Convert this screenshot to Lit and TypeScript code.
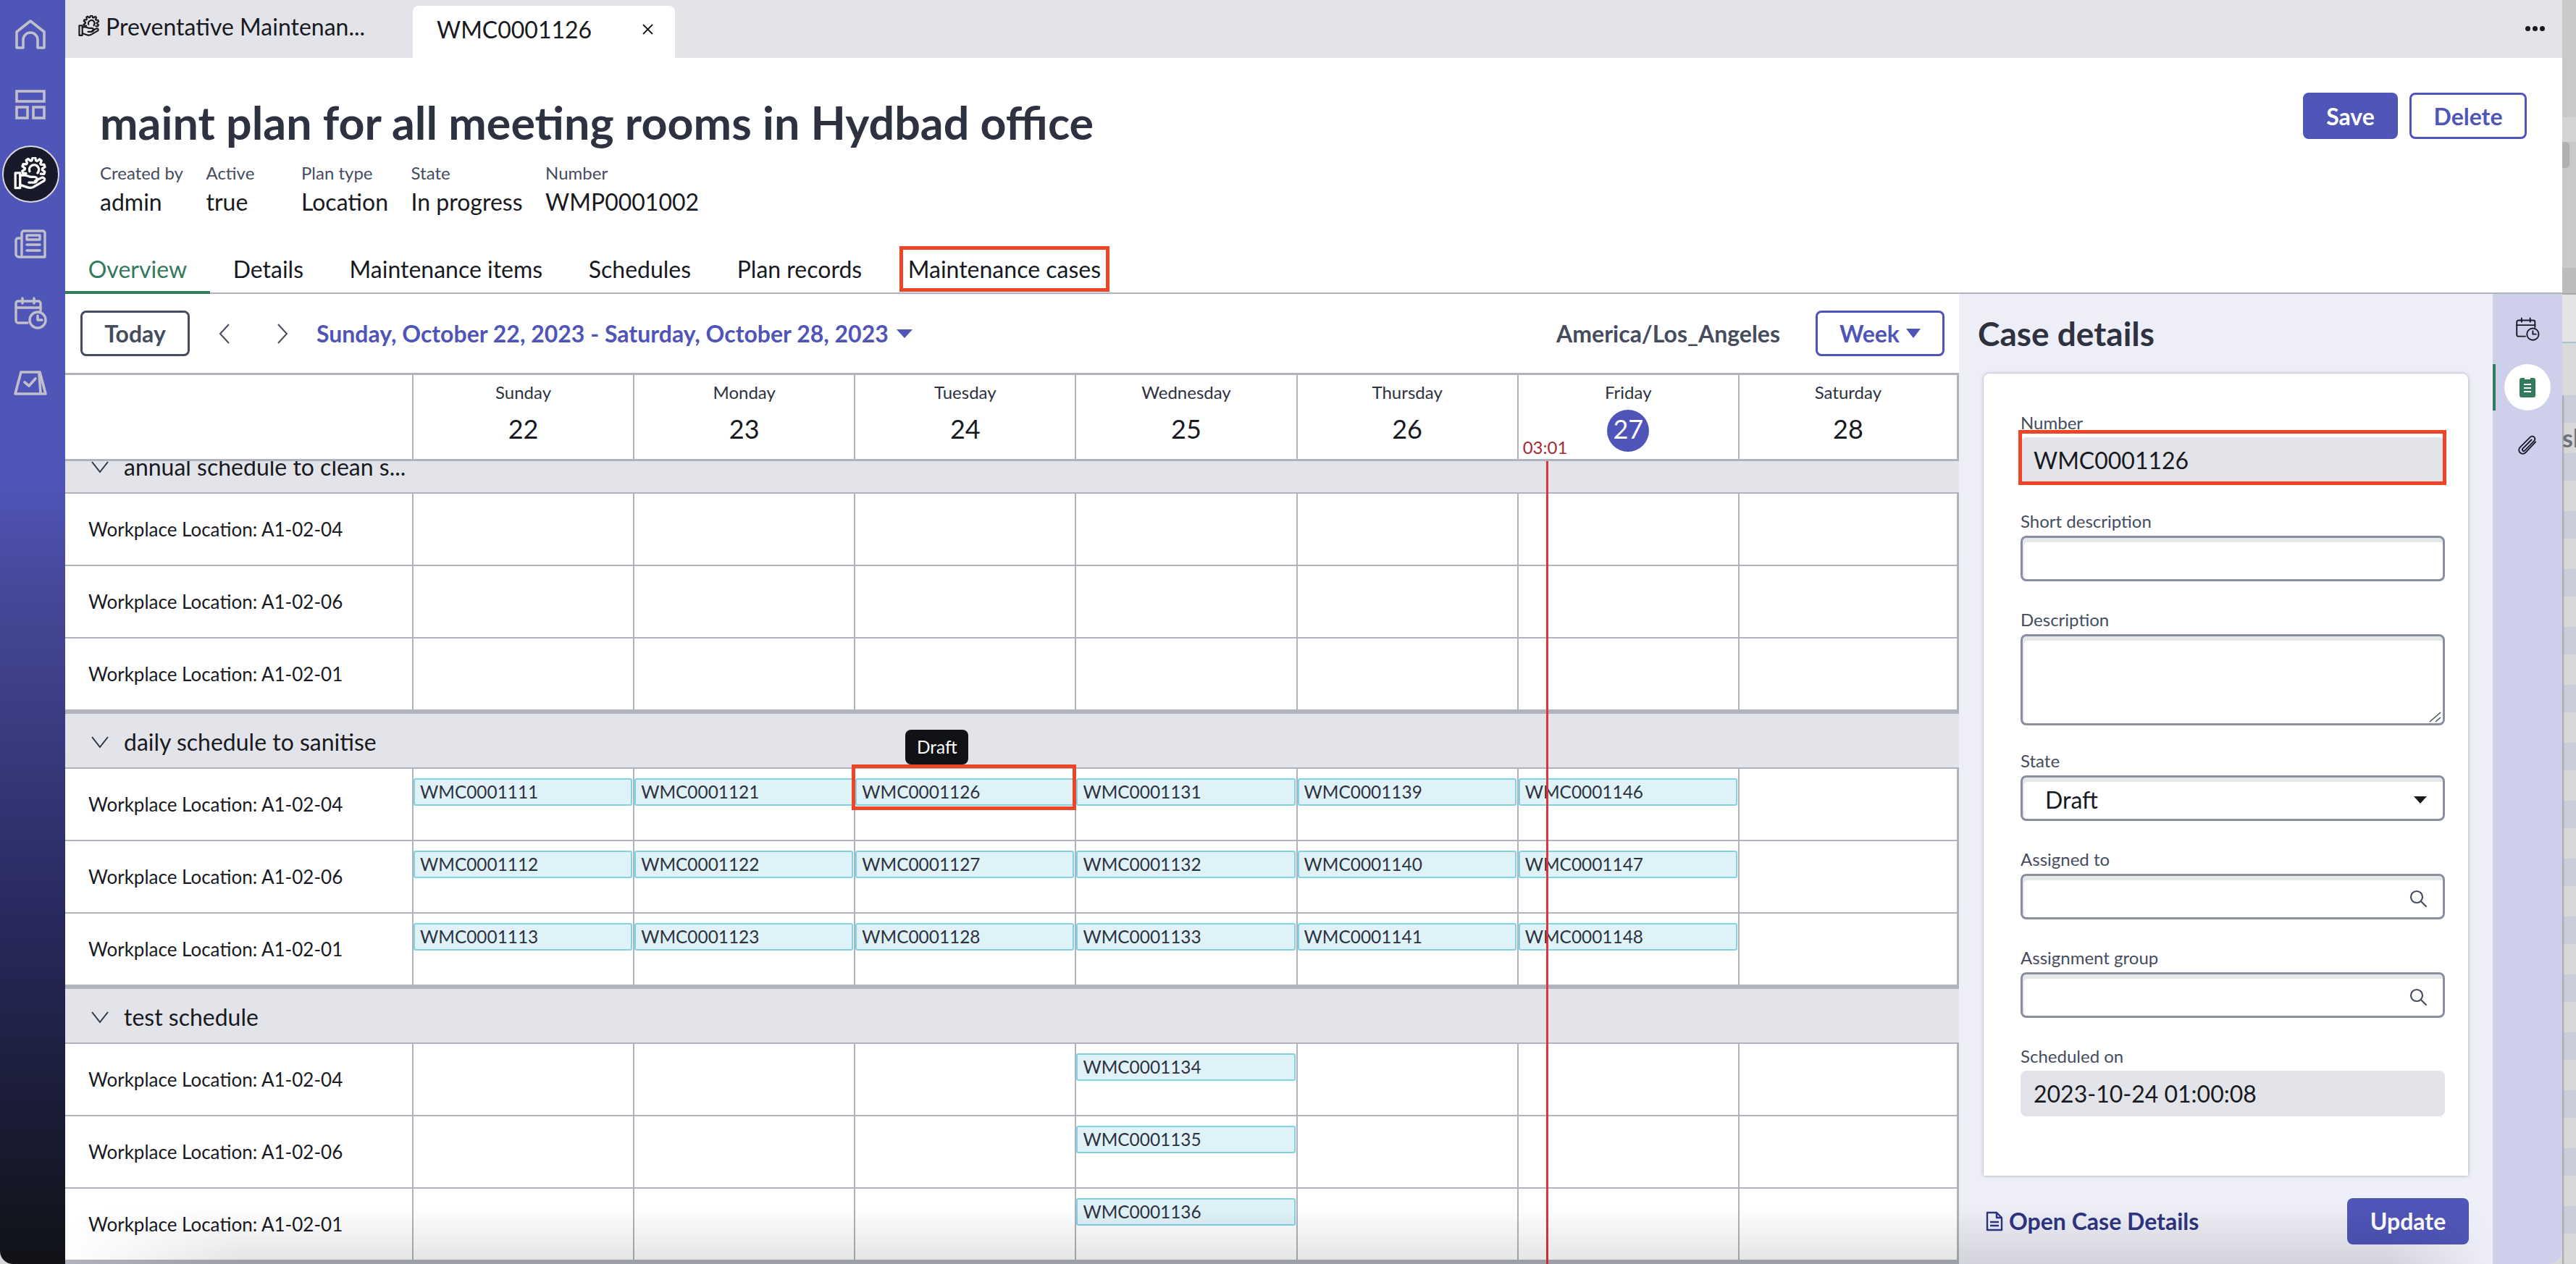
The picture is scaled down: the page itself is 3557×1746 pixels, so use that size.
import { LitElement, html, css } from 'lit';
import { customElement } from 'lit/decorators.js';

// open gear outline, from lower left over the top to lower right
const gearPath = (cx: number, cy: number, inner: number, outer: number) => {
  const pts: string[] = [];
  const step = 36;
  for (let a = 150; a < 400; a += step) {
    const angles: [number, number][] = [
      [a, inner],
      [a + step * 0.22, outer],
      [a + step * 0.55, outer],
      [a + step * 0.77, inner],
    ];
    for (const [deg, r] of angles) {
      const rad = (deg * Math.PI) / 180;
      pts.push(`${(cx + r * Math.cos(rad)).toFixed(1)} ${(cy + r * Math.sin(rad)).toFixed(1)}`);
    }
  }
  return 'M' + pts.join('L');
};

const careIcon = (size: number) => html`
  <svg width=${size} height=${size} viewBox="0 0 42 42" fill="none" stroke="currentColor" stroke-width="3" stroke-linecap="round" stroke-linejoin="round">
    <path d=${gearPath(25, 15, 11, 14.5)} />
    <path d="M20 18a6 6 0 1 1 10 2" />
    <path d="M2 20h6v19H2z" />
    <path d="M8 23h6c3 0 5 2 8 2h4a3 3 0 0 1 0 7h-7" />
    <path d="M8 35l9 3c3 1 6 1 9-1l12-7c2-2 0-5-3-4l-8 4" />
  </svg>`;

const homeIcon = html`
  <svg width="42" height="42" viewBox="0 0 42 42" fill="none" stroke="currentColor" stroke-width="3.6" stroke-linejoin="round">
    <path d="M2 39V17L21 2l19 15v22h-9V28a10 10 0 0 0-20 0v11z" />
  </svg>`;

const layoutIcon = html`
  <svg width="42" height="42" viewBox="0 0 42 42" fill="none" stroke="currentColor" stroke-width="3.6">
    <rect x="2" y="3" width="38" height="14" />
    <rect x="2" y="25" width="15" height="15" />
    <rect x="25" y="25" width="15" height="15" />
  </svg>`;

const newsIcon = html`
  <svg width="44" height="42" viewBox="0 0 44 42" fill="none" stroke="currentColor" stroke-width="3.4" stroke-linecap="round" stroke-linejoin="round">
    <path d="M10 36V6a3 3 0 0 1 3-3h26a3 3 0 0 1 3 3v33H6a4 4 0 0 1-4-4V16a3 3 0 0 1 3-3h5" />
    <rect x="17" y="9" width="18" height="6" />
    <path d="M17 22h18M17 30h18" />
  </svg>`;

const calendarClock = (size: number, sw: number) => html`
  <svg width=${size} height=${size} viewBox="0 0 46 46" fill="none" stroke="currentColor" stroke-width=${sw} stroke-linecap="round" stroke-linejoin="round">
    <path d="M19 36H6a3 3 0 0 1-3-3V9a3 3 0 0 1 3-3h28a3 3 0 0 1 3 3v10" />
    <path d="M3 15h34M12 2v7M28 2v7" />
    <circle cx="33" cy="32" r="11" />
    <path d="M33 26v6h6" />
  </svg>`;

const boardIcon = html`
  <svg width="46" height="34" viewBox="0 0 46 34" fill="none" stroke="currentColor" stroke-width="3.6" stroke-linecap="round" stroke-linejoin="round">
    <path d="M10 2h26l8 30H2z" />
    <path d="M35 3l2 28" />
    <path d="M15 16l6 5 9-10" />
  </svg>`;

const chevronDown = html`
  <svg width="26" height="18" viewBox="0 0 26 18" fill="none" stroke="#2e3240" stroke-width="2"><path d="M2 2l11 14L24 2" /></svg>`;

const searchIcon = html`
  <svg width="24" height="24" viewBox="0 0 24 24" fill="none" stroke="#464c5e" stroke-width="2.2" stroke-linecap="round"><circle cx="10" cy="10" r="8" /><path d="M16 16l7 7" /></svg>`;

interface Row {
  label: string;
  events: (string | null)[];
}

interface Group {
  title: string;
  rows: Row[];
}

const DAYS = [
  ['Sunday', '22'],
  ['Monday', '23'],
  ['Tuesday', '24'],
  ['Wednesday', '25'],
  ['Thursday', '26'],
  ['Friday', '27'],
  ['Saturday', '28'],
];

const none = [null, null, null, null, null, null, null];
const wed = (id: string) => [null, null, null, id, null, null, null];

const GROUPS: Group[] = [
  {
    title: 'annual schedule to clean s...',
    rows: [
      { label: 'Workplace Location: A1-02-04', events: none },
      { label: 'Workplace Location: A1-02-06', events: none },
      { label: 'Workplace Location: A1-02-01', events: none },
    ],
  },
  {
    title: 'daily schedule to sanitise',
    rows: [
      { label: 'Workplace Location: A1-02-04', events: ['WMC0001111', 'WMC0001121', 'WMC0001126', 'WMC0001131', 'WMC0001139', 'WMC0001146', null] },
      { label: 'Workplace Location: A1-02-06', events: ['WMC0001112', 'WMC0001122', 'WMC0001127', 'WMC0001132', 'WMC0001140', 'WMC0001147', null] },
      { label: 'Workplace Location: A1-02-01', events: ['WMC0001113', 'WMC0001123', 'WMC0001128', 'WMC0001133', 'WMC0001141', 'WMC0001148', null] },
    ],
  },
  {
    title: 'test schedule',
    rows: [
      { label: 'Workplace Location: A1-02-04', events: wed('WMC0001134') },
      { label: 'Workplace Location: A1-02-06', events: wed('WMC0001135') },
      { label: 'Workplace Location: A1-02-01', events: wed('WMC0001136') },
    ],
  },
];

@customElement('app-root')
export class AppRoot extends LitElement {
  static styles = css`
    :host {
      display: block;
      width: 3557px;
      height: 1746px;
      overflow: hidden;
      background: #d8d8d8;
      font-family: Lato, "Noto Sans", sans-serif;
      color: #181a1f;
    }
    * { box-sizing: border-box; }
    .desk { display: flex; height: 1746px; }

    .window {
      position: relative;
      display: flex;
      width: 3538px;
      height: 1746px;
      overflow: hidden;
      background: #fff;
      border-radius: 0 0 18px 18px;
    }
    .shade {
      position: absolute;
      left: 90px;
      right: 0;
      bottom: 0;
      height: 80px;
      pointer-events: none;
      z-index: 6;
      background: linear-gradient(rgba(0, 0, 0, 0), rgba(0, 0, 0, 0.11));
      -webkit-mask-image: linear-gradient(90deg, transparent 0, #000 240px, #000 calc(100% - 240px), transparent calc(100% - 100px));
      mask-image: linear-gradient(90deg, transparent 0, #000 240px, #000 calc(100% - 240px), transparent calc(100% - 100px));
    }

    .strip {
      flex: 1;
      display: flex;
      flex-direction: column;
      box-shadow: inset 3px 0 2px -1px #a4a6ad;
      overflow: hidden;
      color: #6f7178;
    }
    .strip-top { height: 370px; background: #c9c9c9; position: relative; }
    .strip-top .thumb {
      position: absolute;
      left: 0;
      top: 196px;
      width: 10px;
      height: 36px;
      border-radius: 0 5px 5px 0;
      background: #b0b0b0;
    }
    .strip-top .light { position: absolute; left: 0; right: 0; top: 162px; height: 34px; background: #d4d4d4; }
    .strip-bar { height: 35px; background: #bcbcbc; }
    .strip-tool { height: 67px; background: #e4e4e4; border-top: 2px solid #a8a8a8; }
    .strip-head { height: 74px; background: #d9d9d9; border-top: 2px solid #a9c0d6; }
    .strip-bands {
      flex: 1;
      background: repeating-linear-gradient(#c9ced9 0, #c9ced9 38px, #d8d8d8 38px, #d8d8d8 80px);
      font-size: 34px;
      font-weight: 700;
      padding-top: 38px;
      line-height: 42px;
      white-space: nowrap;
      box-shadow: inset 3px 0 2px -1px #a4a6ad;
    }

    .nav {
      flex: 0 0 90px;
      color: #c0c0cc;
      background: linear-gradient(#5055b8 0, #5055b8 38%, #46499a 46%, #26285a 74%, #101216 100%);
    }
    .nav-item {
      height: 96.2px;
      display: flex;
      align-items: center;
      justify-content: center;
      padding-right: 6px;
    }
    .nav-item span {
      width: 79px;
      height: 79px;
      border-radius: 50%;
      background: #181a2a;
      border: 2px solid #d8d8e4;
      color: #fff;
      display: flex;
      align-items: center;
      justify-content: center;
    }

    .main { flex: 1; display: flex; flex-direction: column; min-width: 0; }

    .tabbar {
      flex: 0 0 80px;
      display: flex;
      background: #e3e4e9;
      font-size: 32px;
    }
    .tab-first {
      width: 480px;
      display: flex;
      align-items: center;
      gap: 8px;
      padding: 0 0 8px 18px;
    }
    .tab-active {
      margin-top: 8px;
      width: 362px;
      background: #fff;
      border-radius: 8px 8px 0 0;
      display: flex;
      align-items: center;
      padding: 0 0 8px 33px;
      position: relative;
    }
    .tab-active svg { margin-left: 70px; }
    .dots {
      margin-left: auto;
      padding: 36px 24px 0 0;
      display: flex;
      gap: 3px;
    }
    .dots i { width: 7px; height: 7px; border-radius: 50%; background: #181a1f; }

    .head { flex: 0 0 220px; display: flex; justify-content: space-between; padding: 48px 49px 0 48px; }
    .title {
      margin: 1px 0 1px;
      font-size: 62.8px;
      line-height: 80px;
      font-weight: 700;
      color: #2e3240;
    }
    .meta { display: flex; gap: 31.5px; margin-top: 14px; }
    .meta-col:nth-child(2) { min-width: 100px; }
    .meta-label { font-size: 24px; line-height: 32px; color: #464c5e; }
    .meta-value { font-size: 32px; line-height: 40px; margin-top: 4px; }
    .actions { display: flex; gap: 16px; }

    .btn {
      height: 64px;
      display: flex;
      align-items: center;
      justify-content: center;
      border-radius: 8px;
      font-size: 32px;
      font-weight: 700;
    }
    .btn-primary { background: #5055b8; color: #fff; }
    .btn-outline { background: #fff; color: #5055b8; border: 3px solid #5055b8; }
    .save { width: 131px; }
    .delete { width: 162px; }
    .update { width: 168px; }

    .tabs {
      flex: 0 0 106px;
      display: flex;
      align-items: flex-end;
      border-bottom: 2px solid #b0b3bd;
      font-size: 32px;
    }
    .tab {
      padding: 0 31.8px 13px;
      line-height: 34px;
      border-bottom: 4px solid transparent;
      margin-bottom: -2px;
    }
    .tab.on { color: #347a5c; border-bottom-color: #347a5c; }
    .tab.marked span { outline: 5px solid #ef4527; outline-offset: 7px; }

    .work { flex: 1; display: flex; min-height: 0; }

    .calendar { flex: 0 0 2615px; display: flex; flex-direction: column; min-height: 0; }
    .toolbar {
      flex: 0 0 109px;
      display: flex;
      align-items: center;
      padding: 0 20px 0 21px;
      font-size: 32px;
      font-weight: 700;
      color: #464c5e;
    }
    .today {
      width: 151px;
      height: 63px;
      border: 3px solid #464c5e;
      border-radius: 8px;
      display: flex;
      align-items: center;
      justify-content: center;
    }
    .arrows { display: flex; gap: 64px; margin: 0 39px 0 40px; }
    .range { color: #4f55b8; display: flex; align-items: center; gap: 10px; }
    .tz { margin-left: auto; margin-right: 49px; }
    .week {
      width: 178px;
      height: 63px;
      border: 3px solid #4f55b8;
      border-radius: 8px;
      color: #4f55b8;
      display: flex;
      align-items: center;
      justify-content: center;
      gap: 9px;
    }

    .cols { display: grid; grid-template-columns: 479px repeat(7, 1fr); }
    .cols > div { border-left: 2px solid #b0b3bd; }
    .cols > div:first-child { border-left: none; }
    .cols > div:last-child { border-right: 3px solid #b0b3bd; }

    .grid-head {
      flex: 0 0 122px;
      border-top: 3px solid #b0b3bd;
      border-bottom: 3px solid #b0b3bd;
    }
    .day { position: relative; text-align: center; padding-top: 7px; }
    .day-name { font-size: 24px; line-height: 34px; color: #2e3240; }
    .day-num {
      font-size: 36px;
      line-height: 58px;
      width: 58px;
      height: 58px;
      margin: 4px auto 0;
    }
    .day-num.now {
      background: #4f55b8;
      color: #fff;
      border-radius: 50%;
      margin-top: 7px;
      line-height: 52px;
    }
    .now-time {
      position: absolute;
      left: 6px;
      bottom: 0;
      font-size: 24px;
      line-height: 32px;
      color: #a8282e;
    }

    .body { flex: 1; position: relative; overflow: hidden; }
    .scroll { margin-top: -35px; }
    .group-head {
      height: 80px;
      background: #e3e4e9;
      border-top: 4px solid #b0b3bd;
      border-bottom: 2px solid #b0b3bd;
      display: flex;
      align-items: center;
      gap: 20px;
      padding: 3px 0 0 35px;
      font-size: 32px;
    }
    .row { height: 100px; border-bottom: 2px solid #b0b3bd; }
    .row-label {
      display: flex;
      align-items: center;
      padding-left: 32px;
      font-size: 26px;
    }
    .cell { padding-top: 13px; }
    .event {
      position: relative;
      height: 38px;
      margin-right: 1px;
      background: #dff2f7;
      border: 2px solid #80d2e4;
      border-radius: 3px;
      padding-left: 7px;
      font-size: 24.4px;
      line-height: 33px;
      color: #2e3240;
    }
    .mark {
      position: absolute;
      left: -7px;
      right: -5px;
      top: -21px;
      bottom: -8px;
      border: 5px solid #ef4527;
      z-index: 2;
    }
    .tip {
      position: absolute;
      left: 67px;
      bottom: calc(100% + 21px);
      width: 87px;
      height: 48px;
      border-radius: 8px;
      background: #101216;
      color: #fff;
      text-align: center;
      line-height: 48px;
      z-index: 2;
    }
    .now-line {
      position: absolute;
      left: 2045px;
      top: 0;
      bottom: 0;
      width: 3px;
      background: #d9363e;
      z-index: 3;
    }

    .panel {
      flex: 1;
      min-width: 0;
      background: #edeef8;
      display: flex;
      flex-direction: column;
    }
    .panel-title {
      margin: 25px 0 25px 26px;
      font-size: 46px;
      line-height: 60px;
      font-weight: 700;
      color: #2e3240;
    }
    .card {
      flex: 1;
      margin: 0 34px;
      min-height: 0;
      overflow: hidden;
      background: #fff;
      border-radius: 8px 8px 0 0;
      box-shadow: 0 0 4px rgba(70, 76, 94, 0.45);
      padding: 52px 32px 0 51px;
    }
    .field { margin-bottom: 37px; }
    .field.tall { margin-bottom: 33px; }
    .field-label { font-size: 24px; line-height: 32px; padding-bottom: 4px; color: #464c5e; }
    .input {
      position: relative;
      height: 63px;
      border: 3px solid #8a8f9f;
      border-radius: 8px;
      box-shadow: inset 2px 6px 0 #e6e8ea;
      font-size: 32px;
      display: flex;
      align-items: center;
      justify-content: space-between;
      padding: 4px 22px 0 31px;
    }
    .input.area { height: 126px; }
    .grip { position: absolute; right: 1px; bottom: 1px; }
    .readonly {
      position: relative;
      height: 63px;
      border-radius: 8px;
      background: #e3e4e9;
      font-size: 32px;
      line-height: 63px;
      padding-left: 18px;
    }
    .readonly .mark { left: -3px; right: -2px; top: -10px; bottom: -3px; border-radius: 0; z-index: 1; }
    .caret { width: 0; height: 0; border: 9px solid transparent; border-top: 10px solid #181a1f; border-bottom: none; }
    .footer {
      flex: 0 0 122px;
      display: flex;
      align-items: center;
      justify-content: space-between;
      padding: 3px 33px 0 37px;
    }
    .open {
      display: flex;
      align-items: center;
      gap: 8px;
      font-size: 32px;
      font-weight: 700;
      color: #2f3580;
    }

    .rail {
      flex: 0 0 96px;
      background: #cdcfeb;
      display: flex;
      flex-direction: column;
      align-items: center;
      padding-top: 17px;
      color: #181a2a;
    }
    .rail-item { height: 64px; width: 100%; display: flex; align-items: center; justify-content: center; margin-bottom: 16px; }
    .rail-item.on { border-left: 4px solid #347a5c; padding-right: 4px; }
    .rail-item.on span {
      width: 64px;
      height: 64px;
      border-radius: 50%;
      background: #fff;
      display: flex;
      align-items: center;
      justify-content: center;
    }
  `;

  renderEvent(id: string | null) {
    if (!id) return '';
    const picked = id === 'WMC0001126';
    return html`<div class="event">
      ${id}
      ${picked ? html`<div class="mark"></div><div class="tip">Draft</div>` : ''}
    </div>`;
  }

  renderGroup(group: Group) {
    return html`
      <div class="group-head">${chevronDown}<span>${group.title}</span></div>
      ${group.rows.map(
        (row) => html`
          <div class="row cols">
            <div class="row-label">${row.label}</div>
            ${row.events.map((id) => html`<div class="cell">${this.renderEvent(id)}</div>`)}
          </div>
        `
      )}
    `;
  }

  renderCalendar() {
    return html`
      <section class="calendar">
        <div class="toolbar">
          <div class="today">Today</div>
          <div class="arrows">
            <svg width="16" height="30" viewBox="0 0 16 30" fill="none" stroke="#464c5e" stroke-width="2"><path d="M14 2L2 15l12 13" /></svg>
            <svg width="16" height="30" viewBox="0 0 16 30" fill="none" stroke="#464c5e" stroke-width="2"><path d="M2 2l12 13L2 28" /></svg>
          </div>
          <div class="range">
            Sunday, October 22, 2023 - Saturday, October 28, 2023
            <svg width="24" height="14" viewBox="0 0 24 14"><path d="M1 1h22L12 13z" fill="#4f55b8" /></svg>
          </div>
          <div class="tz">America/Los_Angeles</div>
          <div class="week">
            Week
            <svg width="20" height="13" viewBox="0 0 20 13"><path d="M0 0h20L10 13z" fill="#4f55b8" /></svg>
          </div>
        </div>
        <div class="grid-head cols">
          <div></div>
          ${DAYS.map(
            ([name, num]) => html`
              <div class="day">
                <div class="day-name">${name}</div>
                <div class="day-num ${name === 'Friday' ? 'now' : ''}">${num}</div>
                ${name === 'Friday' ? html`<div class="now-time">03:01</div>` : ''}
              </div>
            `
          )}
        </div>
        <div class="body">
          <div class="scroll">
            ${GROUPS.map((g) => this.renderGroup(g))}
            <div class="group-head"></div>
          </div>
          <div class="now-line"></div>
        </div>
      </section>
    `;
  }

  renderPanel() {
    return html`
      <aside class="panel">
        <h2 class="panel-title">Case details</h2>
        <div class="card">
          <div class="field">
            <div class="field-label">Number</div>
            <div class="readonly">WMC0001126<div class="mark"></div></div>
          </div>
          <div class="field">
            <div class="field-label">Short description</div>
            <div class="input"></div>
          </div>
          <div class="field tall">
            <div class="field-label">Description</div>
            <div class="input area">
              <svg class="grip" width="18" height="16" viewBox="0 0 18 16" fill="none" stroke="#464c5e" stroke-width="1.5"><path d="M1 15L16 2M9 15l7-6" /></svg>
            </div>
          </div>
          <div class="field">
            <div class="field-label">State</div>
            <div class="input">Draft<i class="caret"></i></div>
          </div>
          <div class="field">
            <div class="field-label">Assigned to</div>
            <div class="input"><span></span>${searchIcon}</div>
          </div>
          <div class="field">
            <div class="field-label">Assignment group</div>
            <div class="input"><span></span>${searchIcon}</div>
          </div>
          <div class="field">
            <div class="field-label">Scheduled on</div>
            <div class="readonly">2023-10-24 01:00:08</div>
          </div>
        </div>
        <div class="footer">
          <div class="open">
            <svg width="24" height="28" viewBox="0 0 24 28" fill="none" stroke="currentColor" stroke-width="2.4" stroke-linejoin="round"><path d="M2 2h13l7 7v17H2z" /><path d="M15 2v7h7M6 15h12M6 20h12" /></svg>
            Open Case Details
          </div>
          <div class="btn btn-primary update">Update</div>
        </div>
      </aside>
    `;
  }

  renderRail() {
    return html`
      <nav class="rail">
        <div class="rail-item">${calendarClock(34, 2.6)}</div>
        <div class="rail-item on">
          <span>
            <svg width="24" height="30" viewBox="0 0 24 30">
              <rect x="1" y="2" width="22" height="27" rx="3" fill="#347a5c" />
              <path d="M8 3h8M7 11h10M7 16h10M7 21h10" stroke="#fff" stroke-width="2" fill="none" />
            </svg>
          </span>
        </div>
        <div class="rail-item">
          <svg width="28" height="30" viewBox="0 0 30 32" fill="none" stroke="currentColor" stroke-width="2" stroke-linecap="round"><path d="M27 11L12 27a5.5 5.5 0 0 1-8-8L19 4a4 4 0 0 1 6 5.5L11 24a2 2 0 0 1-3-3L21 8" /></svg>
        </div>
      </nav>
    `;
  }

  render() {
    return html`
      <div class="desk">
        <div class="window">
          <div class="nav">
            <div class="nav-item">${homeIcon}</div>
            <div class="nav-item">${layoutIcon}</div>
            <div class="nav-item"><span>${careIcon(46)}</span></div>
            <div class="nav-item">${newsIcon}</div>
            <div class="nav-item">${calendarClock(46, 3.4)}</div>
            <div class="nav-item">${boardIcon}</div>
          </div>
          <div class="main">
            <div class="tabbar">
              <div class="tab-first">${careIcon(30)}<span>Preventative Maintenan...</span></div>
              <div class="tab-active">
                WMC0001126
                <svg width="15" height="15" viewBox="0 0 15 15" stroke="#181a1f" stroke-width="1.8"><path d="M1 1l13 13M14 1L1 14" /></svg>
              </div>
              <div class="dots"><i></i><i></i><i></i></div>
            </div>
            <header class="head">
              <div>
                <h1 class="title">maint plan for all meeting rooms in Hydbad office</h1>
                <div class="meta">
                  ${[
                    ['Created by', 'admin'],
                    ['Active', 'true'],
                    ['Plan type', 'Location'],
                    ['State', 'In progress'],
                    ['Number', 'WMP0001002'],
                  ].map(
                    ([label, value]) => html`
                      <div class="meta-col">
                        <div class="meta-label">${label}</div>
                        <div class="meta-value">${value}</div>
                      </div>
                    `
                  )}
                </div>
              </div>
              <div class="actions">
                <div class="btn btn-primary save">Save</div>
                <div class="btn btn-outline delete">Delete</div>
              </div>
            </header>
            <div class="tabs">
              <div class="tab on"><span>Overview</span></div>
              <div class="tab"><span>Details</span></div>
              <div class="tab"><span>Maintenance items</span></div>
              <div class="tab"><span>Schedules</span></div>
              <div class="tab"><span>Plan records</span></div>
              <div class="tab marked"><span>Maintenance cases</span></div>
            </div>
            <div class="work">
              ${this.renderCalendar()}
              ${this.renderPanel()}
              ${this.renderRail()}
            </div>
          </div>
          <div class="shade"></div>
        </div>
        <div class="strip">
          <div class="strip-top"><div class="light"></div><div class="thumb"></div></div>
          <div class="strip-bar"></div>
          <div class="strip-tool"></div>
          <div class="strip-head"></div>
          <div class="strip-bands">sk</div>
        </div>
      </div>
    `;
  }
}
